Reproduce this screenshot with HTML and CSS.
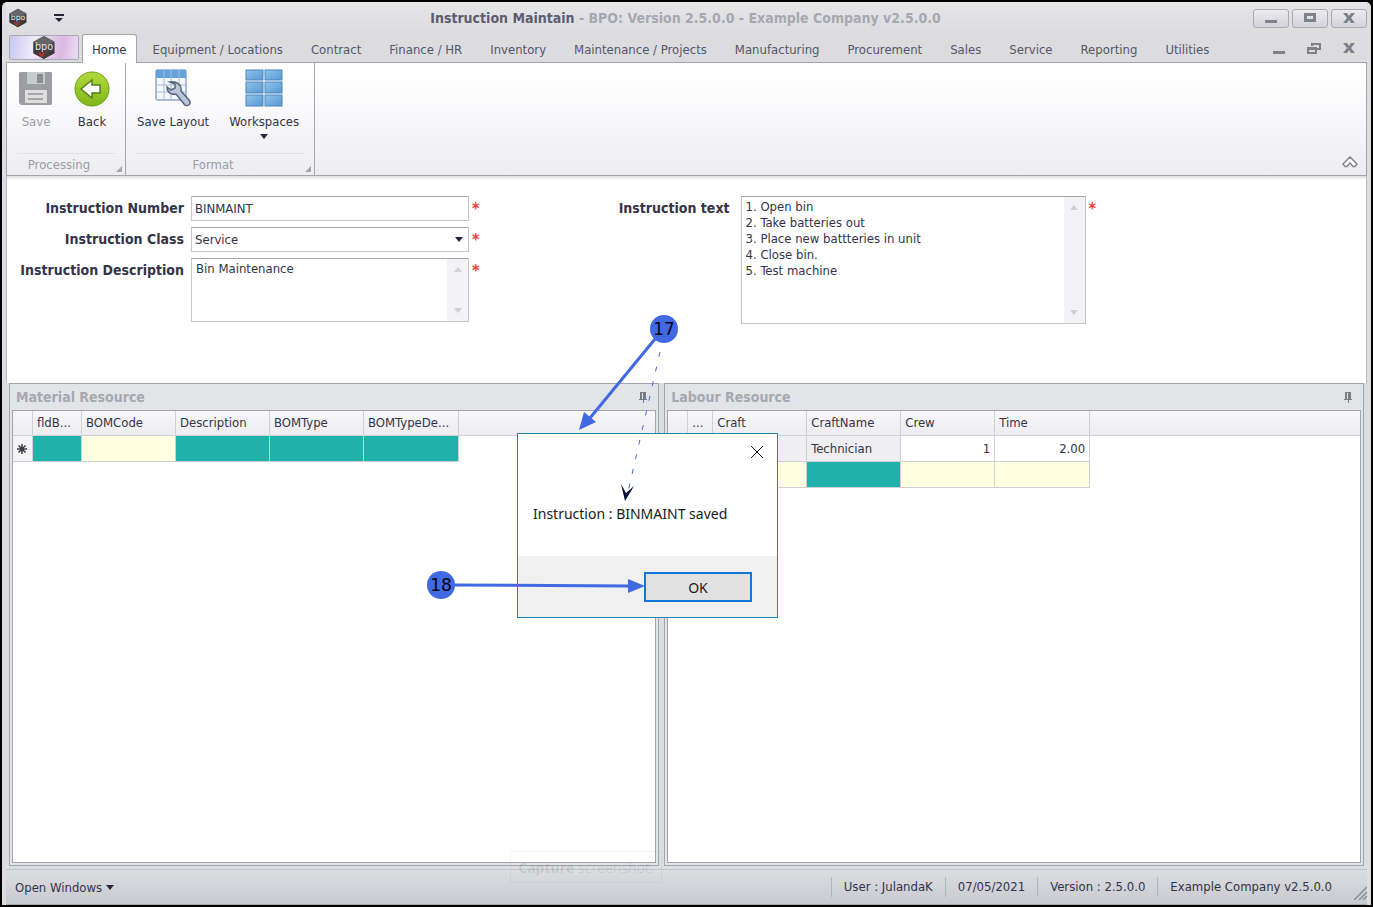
FILE: index.html
```html
<!DOCTYPE html>
<html lang="en">
<head>
    <meta charset="UTF-8">
    <meta name="viewport" content="width=device-width, initial-scale=1.0">
    <title>Instruction Maintain - BPO: Version 2.5.0.0 - Example Company v2.5.0.0</title>
    <link rel="stylesheet" href="styles.css">
</head>
<body>
    <svg class="defs" aria-hidden="true">
        <defs>
            <linearGradient id="hex" x1="0" y1="0" x2="1" y2="1">
                <stop offset="0" stop-color="#77777a"/><stop offset="1" stop-color="#29292b"/>
            </linearGradient>
            <linearGradient id="green" x1="0" y1="0" x2="0" y2="1">
                <stop offset="0" stop-color="#b4da3c"/><stop offset="1" stop-color="#7fb619"/>
            </linearGradient>
            <linearGradient id="blue" x1="0" y1="0" x2="1" y2="1">
                <stop offset="0" stop-color="#8fc3ec"/><stop offset="1" stop-color="#5a98d2"/>
            </linearGradient>
            <symbol id="logo" viewBox="0 0 24 26">
                <path d="M12 1 23 7v12l-11 6L1 19V7z" fill="url(#hex)"/>
                <path d="M12 1 23 7l-11 5L1 7z" fill="#66666a"/>
                <path d="M12 13v12l-11-6V7z" fill="#3a3a3d"/>
                <path d="M7 18l3 4 2-4" fill="none" stroke="#b8302c" stroke-width="2"/>
                <text x="12" y="16" class="logo-text">bpo</text>
            </symbol>
            <symbol id="pin" viewBox="0 0 10 11">
                <path d="M2 0h6v7h1v1H6v3H5V8H1V7h1z" fill="#7c7d84"/>
                <path d="M4 1h1v6H4z" fill="#e2e3e7"/>
            </symbol>
        </defs>
    </svg>

    <div class="window">
        <header class="titlebar">
            <svg class="app-icon"><use href="#logo"/></svg>
            <button class="quick-btn" aria-label="Customize quick access">
                <svg width="10" height="8"><path d="M0 0h10v2H0zM1 4h8L5 8z" fill="#26263a"/></svg>
            </button>
            <h1 class="title"><strong>Instruction Maintain</strong> - BPO: Version 2.5.0.0 - Example Company v2.5.0.0</h1>
            <div class="window-btns">
                <button aria-label="Minimize"><svg width="12" height="10"><path d="M0 7h12v3H0z"/></svg></button>
                <button aria-label="Maximize"><svg width="12" height="10"><path d="M0 0h12v9H0zM3 3v3h6V3z" fill-rule="evenodd"/></svg></button>
                <button aria-label="Close"><svg width="12" height="10"><path d="M0 0h4l2 3 2-3h4L8 5l4 5H8L6 7l-2 3H0l4-5z"/></svg></button>
            </div>
        </header>

        <nav class="tabs">
            <button class="app-btn" aria-label="Application menu"><svg><use href="#logo"/></svg></button>
            <a href="#" class="tab active">Home</a>
            <a href="#" class="tab">Equipment / Locations</a>
            <a href="#" class="tab">Contract</a>
            <a href="#" class="tab">Finance / HR</a>
            <a href="#" class="tab">Inventory</a>
            <a href="#" class="tab">Maintenance / Projects</a>
            <a href="#" class="tab">Manufacturing</a>
            <a href="#" class="tab">Procurement</a>
            <a href="#" class="tab">Sales</a>
            <a href="#" class="tab">Service</a>
            <a href="#" class="tab">Reporting</a>
            <a href="#" class="tab">Utilities</a>
            <div class="child-btns">
                <button aria-label="Minimize form"><svg width="12" height="11"><path d="M0 8h12v3H0z"/></svg></button>
                <button aria-label="Restore form"><svg width="14" height="11"><path d="M4 0h10v7h-4V5h2V2H6v1H4zM0 4h10v7H0zM2 7v2h6V7z" fill-rule="evenodd"/></svg></button>
                <button aria-label="Close form"><svg width="12" height="10"><path d="M0 0h4l2 3 2-3h4L8 5l4 5H8L6 7l-2 3H0l4-5z"/></svg></button>
            </div>
        </nav>

        <section class="ribbon">
            <div class="ribbon-group">
                <div class="ribbon-items">
                    <button class="ribbon-btn" disabled>
                        <svg width="36" height="38" viewBox="0 0 36 38">
                            <path d="M2 3h31l1 1v31l-1 1H3l-2-2V4z" fill="#9c9da0"/>
                            <path d="M9 3h18v12H9z" fill="#c9cacc"/>
                            <path d="M19 5h6v9h-6z" fill="#8b8c90"/>
                            <path d="M7 21h22v13H7z" fill="#dededf"/>
                            <path d="M10 25h15M10 30h15" stroke="#a6a7aa" stroke-width="2"/>
                        </svg>
                        <span>Save</span>
                    </button>
                    <button class="ribbon-btn">
                        <svg width="36" height="38" viewBox="0 0 36 38">
                            <circle cx="18" cy="20" r="17" fill="url(#green)" stroke="#6b9e17"/>
                            <path d="M7 20 18 11v5h8v8h-8v5z" fill="#fff" stroke="#53801a" stroke-width="1.5"/>
                        </svg>
                        <span>Back</span>
                    </button>
                </div>
                <div class="group-caption">Processing</div>
            </div>
            <div class="ribbon-group">
                <div class="ribbon-items wide">
                    <button class="ribbon-btn">
                        <svg width="36" height="38" viewBox="0 0 36 38">
                            <rect x="1" y="1" width="30" height="30" rx="1" fill="#f4f7fc" stroke="#5e7fae"/>
                            <path d="M1 1h30v8H1z" fill="#63a2db"/>
                            <path d="M1 16h30M1 23h30M9 1v30M16 1v30M24 1v30" stroke="#a9bbd8"/>
                            <path d="M15 13l5 2v4l-4 2-4-3c0 6 5 8 9 7l8 10c3 4 8 0 5-4l-8-9c1-6-4-10-11-9z" fill="#bcc6d6" stroke="#56657f" stroke-width="1.5"/>
                        </svg>
                        <span>Save Layout</span>
                    </button>
                    <button class="ribbon-btn">
                        <svg width="38" height="38" viewBox="0 0 38 38">
                            <g fill="url(#blue)" stroke="#4a86c0">
                                <rect x="1" y="1" width="17" height="10"/><rect x="20" y="1" width="17" height="10"/>
                                <rect x="1" y="13" width="17" height="11"/><rect x="20" y="13" width="17" height="11"/>
                                <rect x="1" y="26" width="17" height="11"/><rect x="20" y="26" width="17" height="11"/>
                            </g>
                        </svg>
                        <span>Workspaces</span>
                        <i class="arrow-down"></i>
                    </button>
                </div>
                <div class="group-caption">Format</div>
            </div>
            <button class="collapse-btn" aria-label="Collapse ribbon">
                <svg width="16" height="12"><path d="M1 8 8 1l7 7-2 2.500h-2L8 7l-3 3.500H3z" fill="#fff" stroke="#85868c" stroke-width="1.500"/></svg>
            </button>
        </section>

        <form class="instruction-form">
            <div class="fields">
                <label for="number">Instruction Number</label>
                <input class="box" type="text" id="number" value="BINMAINT">
                <span class="required">*</span>

                <label for="class">Instruction Class</label>
                <div class="select-wrap">
                    <select class="box" id="class"><option>Service</option></select>
                    <i class="arrow-down"></i>
                </div>
                <span class="required">*</span>

                <label for="description">Instruction Description</label>
                <div class="box memo">
                    <textarea id="description">Bin Maintenance</textarea>
                    <div class="scroll"><i class="up"></i><i class="down"></i></div>
                </div>
                <span class="required">*</span>
            </div>

            <div class="fields text-fields">
                <label for="text">Instruction text</label>
                <div class="box memo tall">
                    <textarea id="text">1. Open bin
2. Take batteries out
3. Place new battteries in unit
4. Close bin.
5. Test machine</textarea>
                    <div class="scroll"><i class="up"></i><i class="down"></i></div>
                </div>
                <span class="required">*</span>
            </div>
        </form>

        <main class="panels">
            <section class="panel material">
                <div class="panel-title"><h2>Material Resource</h2><svg width="10" height="11"><use href="#pin"/></svg></div>
                <div class="grid-box">
                    <table>
                        <colgroup><col class="c-mark"><col class="c-id"><col class="c-std"><col class="c-std"><col class="c-std"><col class="c-last"><col></colgroup>
                        <thead>
                            <tr><th></th><th>fldB...</th><th>BOMCode</th><th>Description</th><th>BOMType</th><th>BOMTypeDe...</th><th></th></tr>
                        </thead>
                        <tbody>
                            <tr><td class="mark"><svg width="10" height="10"><path d="M5 0v10M0 5h10M1.500 1.500l7 7M8.500 1.500l-7 7" stroke="#3c3c48" stroke-width="1.500"/></svg></td><td class="teal"></td><td class="yellow"></td><td class="teal"></td><td class="teal"></td><td class="teal"></td><td class="rest"></td></tr>
                        </tbody>
                    </table>
                </div>
            </section>

            <section class="panel labour">
                <div class="panel-title"><h2>Labour Resource</h2><svg width="10" height="11"><use href="#pin"/></svg></div>
                <div class="grid-box">
                    <table>
                        <colgroup><col class="c-mark"><col class="c-dots"><col class="c-std"><col class="c-std"><col class="c-std"><col class="c-last"><col></colgroup>
                        <thead>
                            <tr><th></th><th>...</th><th>Craft</th><th>CraftName</th><th>Crew</th><th>Time</th><th></th></tr>
                        </thead>
                        <tbody>
                            <tr><td class="mark"></td><td></td><td class="gray"></td><td class="gray">Technician</td><td class="num">1</td><td class="num">2.00</td><td class="rest"></td></tr>
                            <tr><td class="mark"></td><td class="teal"></td><td class="yellow"></td><td class="teal"></td><td class="yellow"></td><td class="yellow"></td><td class="rest"></td></tr>
                        </tbody>
                    </table>
                </div>
            </section>
        </main>

        <footer class="statusbar">
            <button class="open-windows">Open Windows <i class="arrow-down"></i></button>
            <span class="status">User : JulandaK</span>
            <span class="status">07/05/2021</span>
            <span class="status">Version : 2.5.0.0</span>
            <span class="status">Example Company v2.5.0.0</span>
            <svg class="grip" width="14" height="14"><path d="M1 14 14 1M6 14l8-8M10 14l4-4" stroke="#8b8c93" stroke-width="1.500"/></svg>
        </footer>
    </div>

    <div class="capture-tip"><strong>Capture</strong> screenshot.</div>

    <div class="dialog" role="dialog" aria-labelledby="dialog-msg">
        <div class="dialog-body">
            <button class="dialog-close" aria-label="Close"><svg width="12" height="12"><path d="M0 0l12 12M12 0 0 12" stroke="#111"/></svg></button>
            <p id="dialog-msg">Instruction : BINMAINT saved</p>
        </div>
        <div class="dialog-footer"><button class="ok-btn">OK</button></div>
    </div>

    <!-- Step callouts -->
    <svg class="callouts" width="1373" height="907">
        <path d="M655 339 590 418" stroke="#4169e1" stroke-width="3"/>
        <path d="M579 430l5-18 12 10z" fill="#4169e1"/>
        <path d="M660 352 628 492" stroke="#4169e1" stroke-dasharray="5 10"/>
        <path d="M625 501l-4-17 5 9 8-7z" fill="#0a0f3c"/>
        <path d="M455 585l175 1" stroke="#4169e1" stroke-width="3"/>
        <path d="M645 586l-17-7v14z" fill="#4169e1"/>
        <circle cx="664" cy="329" r="14" fill="#4169e1"/>
        <circle cx="441" cy="585" r="14" fill="#4169e1"/>
        <text x="664" y="335">17</text>
        <text x="441" y="591">18</text>
    </svg>
</body>
</html>
```
FILE: styles.css
```css
:root {
    --text: #33334a;
    --tab-text: #55566a;
    --muted: #9b9ca8;
    --line: #a3a4ac;
    --cell-line: #cfd0d6;
    --teal: #20b2aa;
    --yellow: #ffffe1;
}

* {
    box-sizing: border-box;
}

body {
    margin: 0;
    padding: 2px;
    height: 100vh;
    background: #000;
    color: var(--text);
    font-family: "DejaVu Sans Condensed", "Noto Sans", sans-serif;
    font-size: 13px;
    overflow: hidden;
}

button, input, select, textarea {
    font: inherit;
    color: inherit;
}

button {
    padding: 0;
    border: none;
    background: none;
}

a {
    color: inherit;
    text-decoration: none;
}

svg {
    display: block;
}

.defs {
    position: absolute;
    width: 0;
    height: 0;
}

.logo-text {
    fill: #e4e4e8;
    font-family: "DejaVu Sans", sans-serif;
    font-size: 10px;
    text-anchor: middle;
}

.window {
    display: flex;
    flex-direction: column;
    height: 100%;
    padding: 0 4px;
    border-radius: 5px 5px 0 0;
    background: #dcdde1;
}

.arrow-down {
    display: inline-block;
    border: 4px solid transparent;
    border-top: 5px solid #26263a;
    border-bottom: none;
}

/* Title bar */
.titlebar {
    display: flex;
    align-items: center;
    height: 32px;
    background: linear-gradient(#e6e6e8, #dcdcdf);
}

.app-icon {
    width: 20px;
    height: 20px;
    margin-left: 2px;
}

.quick-btn {
    margin-left: 26px;
}

.title {
    flex: 1;
    margin: 0;
    padding-left: 54px;
    text-align: center;
    font-size: 14px;
    font-weight: bold;
    color: #a6a7b0;
}

.title strong {
    color: #5c5d70;
}

.window-btns {
    display: flex;
    gap: 3px;
}

.window-btns button {
    display: flex;
    align-items: center;
    justify-content: center;
    width: 36px;
    height: 19px;
    border: 1px solid #a9aab0;
    border-radius: 3px;
    background: linear-gradient(#ececef, #d2d3d9);
}

.window-btns svg, .child-btns svg {
    fill: #7f8088;
}

/* Tabs */
.tabs {
    display: flex;
    height: 28px;
    padding-left: 3px;
    background: #dcdcdf;
    color: var(--tab-text);
}

.app-btn {
    display: flex;
    align-items: center;
    justify-content: center;
    width: 70px;
    height: 25px;
    margin: 1px 3px 0 0;
    border: 1px solid #a9a9b5;
    border-radius: 2px;
    background: linear-gradient(100deg, #c9c6f0, #efeafa 35%, #dcb8e4 75%, #eddcf3);
}

.app-btn svg {
    width: 24px;
    height: 25px;
}

.tab {
    padding: 0 14px;
    line-height: 31px;
    white-space: nowrap;
}

.tab.active {
    z-index: 1;
    height: 29px;
    margin: 0 2px 0 0;
    padding: 0 9px;
    border: 1px solid var(--line);
    border-bottom: none;
    border-radius: 3px 3px 0 0;
    background: #fff;
    color: var(--text);
    line-height: 29px;
}

.child-btns {
    display: flex;
    align-items: center;
    gap: 22px;
    margin-left: auto;
    padding-right: 12px;
}

/* Ribbon */
.ribbon {
    display: flex;
    height: 114px;
    border: 1px solid var(--line);
    background: linear-gradient(#fff, #fafafc 40%, #ededf0);
}

.ribbon-group {
    position: relative;
    display: flex;
    flex-direction: column;
    justify-content: space-between;
    border-right: 1px solid var(--line);
}

.ribbon-group::after {
    content: "";
    position: absolute;
    right: 3px;
    bottom: 3px;
    border: 3px solid #a3a4ac;
    border-top-color: transparent;
    border-left-color: transparent;
}

.ribbon-items {
    display: flex;
    gap: 20px;
    padding: 6px 15px 0 11px;
}

.ribbon-items.wide {
    padding: 6px 15px 0 11px;
}

.ribbon-btn {
    display: flex;
    flex-direction: column;
    align-items: center;
    min-width: 36px;
}

.ribbon-btn span {
    margin-top: 6px;
    line-height: 18px;
}

.ribbon-btn .arrow-down {
    margin-top: 3px;
}

.ribbon-btn:disabled {
    color: var(--muted);
}

.group-caption {
    height: 22px;
    margin: 0 10px;
    padding-right: 14px;
    border-top: 1px solid #e0e0e5;
    color: var(--muted);
    line-height: 21px;
    text-align: center;
}

.collapse-btn {
    align-self: flex-end;
    margin: 0 8px 7px auto;
}

/* Form */
.instruction-form {
    display: flex;
    align-items: flex-start;
    height: 207px;
    padding-top: 20px;
    border: 1px solid #b9bac1;
    border-width: 0 1px;
    background: linear-gradient(#dcdde1, #fff 4px);
}

.fields {
    display: grid;
    grid-template-columns: 177px 278px auto;
    column-gap: 7px;
    row-gap: 6px;
    align-items: start;
}

.text-fields {
    grid-template-columns: 120px 345px auto;
    column-gap: 11px;
    margin-left: 130px;
}

.fields label {
    font-size: 14px;
    font-weight: bold;
    line-height: 25px;
    text-align: right;
    white-space: nowrap;
}

.box {
    width: 100%;
    height: 25px;
    padding: 0 3px;
    border: 1px solid #c5c6cc;
    border-top-color: var(--line);
    border-radius: 0;
    background: #fff;
}

.select-wrap {
    position: relative;
}

.select-wrap select {
    display: block;
    appearance: none;
}

.select-wrap .arrow-down {
    position: absolute;
    right: 6px;
    top: 10px;
    pointer-events: none;
}

.memo {
    display: flex;
    height: 64px;
    padding: 0;
}

.memo.tall {
    height: 128px;
}

.memo textarea {
    flex: 1;
    padding: 2px 0 0 4px;
    border: none;
    outline: none;
    background: none;
    line-height: 16px;
    resize: none;
    overflow: hidden;
}

.memo .scroll {
    display: flex;
    flex-direction: column;
    justify-content: space-between;
    align-items: center;
    width: 21px;
    padding: 8px 0;
    background: #f3f3f5;
}

.scroll i {
    border: 4px solid transparent;
}

.scroll .up {
    border-top: none;
    border-bottom: 5px solid #cfcfd4;
}

.scroll .down {
    border-bottom: none;
    border-top: 5px solid #cfcfd4;
}

.required {
    margin-left: -4px;
    color: #f03c3c;
    font-weight: bold;
    font-size: 16px;
    line-height: 25px;
}

.text-fields .required {
    margin-left: -8px;
}

/* Resource panels */
.panels {
    flex: 1;
    display: flex;
    gap: 5px;
    min-height: 0;
    padding: 0 3px 3px;
}

.panel {
    display: flex;
    flex-direction: column;
    min-width: 0;
    padding: 0 2px 2px;
    border: 1px solid var(--line);
    background: #e3e4e8;
}

.material {
    flex: 650;
}

.labour {
    flex: 700;
}

.panel-title {
    display: flex;
    align-items: center;
    justify-content: space-between;
    height: 26px;
    padding: 0 8px 0 4px;
}

.panel-title h2 {
    margin: 0;
    font-size: 14px;
    color: #a6a8b0;
}

.grid-box {
    flex: 1;
    border: 1px solid var(--line);
    background: #fff;
}

table {
    width: 100%;
    table-layout: fixed;
    border-collapse: separate;
    border-spacing: 0;
}

.c-mark { width: 20px; }
.c-id { width: 49px; }
.c-dots { width: 25px; }
.c-std { width: 94px; }
.c-last { width: 95px; }

th, td {
    height: 26px;
    padding: 0 4px;
    border-right: 1px solid var(--cell-line);
    border-bottom: 1px solid var(--cell-line);
    font-weight: normal;
    text-align: left;
    white-space: nowrap;
    overflow: hidden;
}

th {
    height: 25px;
    padding-bottom: 2px;
    background: linear-gradient(#f8f8fa, #ededf1);
}

th:last-child {
    border-right: none;
}

.mark {
    background: #f4f4f7;
}

.teal {
    background: var(--teal);
}

.yellow {
    background: var(--yellow);
}

.gray {
    background: #efeff1;
}

.num {
    text-align: right;
}

td.rest {
    border: none;
}

/* Status bar */
.statusbar {
    display: flex;
    align-items: center;
    height: 36px;
    border-top: 1px solid #bfc0c8;
    border-bottom: 1px solid var(--line);
    background: linear-gradient(#dcdde1, #c9cad0);
}

.open-windows {
    display: flex;
    align-items: center;
    gap: 4px;
    margin-right: auto;
    padding-left: 9px;
}

.status {
    padding: 0 12px;
    border-left: 1px solid #b3b4bc;
    line-height: 20px;
}

.grip {
    align-self: flex-end;
    margin: 0 0 4px 9px;
}

/* Overlays */
.capture-tip {
    position: absolute;
    left: 510px;
    top: 851px;
    width: 152px;
    height: 32px;
    border: 1px solid rgba(0, 0, 0, 0.04);
    color: rgba(0, 0, 0, 0.09);
    font-family: "Open Sans", sans-serif;
    font-size: 14px;
    line-height: 32px;
    text-align: center;
}

.dialog {
    position: absolute;
    left: 517px;
    top: 433px;
    display: flex;
    flex-direction: column;
    width: 261px;
    height: 185px;
    border: 1px solid #1f86b0;
    background: #fff;
    color: #1a1a1a;
    font-family: "Noto Sans", sans-serif;
    font-size: 14px;
}

.dialog-body {
    flex: 1;
    display: flex;
    flex-direction: column;
    justify-content: space-between;
    padding: 12px 14px 32px 15px;
}

.dialog-close {
    align-self: flex-end;
}

.dialog p {
    margin: 0;
    line-height: 20px;
}

.dialog-footer {
    display: flex;
    justify-content: flex-end;
    padding: 16px 25px 15px;
    background: #f0f0f0;
}

.ok-btn {
    width: 108px;
    height: 30px;
    border: 2px solid #0f78d4;
    background: #e1e1e1;
}

.callouts {
    position: absolute;
    left: 0;
    top: 0;
    pointer-events: none;
}

.callouts text {
    fill: #05051e;
    font-family: "DejaVu Sans", sans-serif;
    font-size: 17px;
    text-anchor: middle;
}
```
